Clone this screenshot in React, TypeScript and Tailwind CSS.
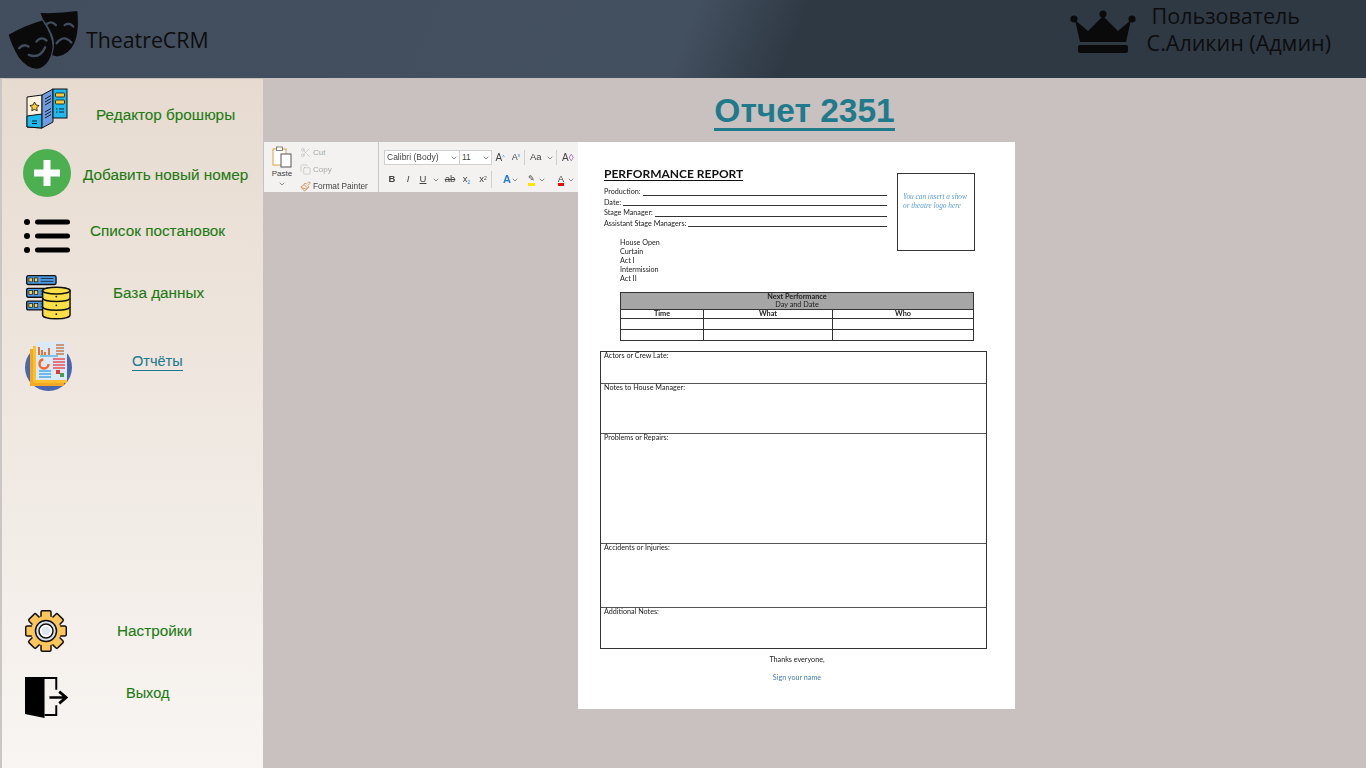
import { ChevronDown, Scissors, Copy, Paintbrush } from "lucide-react";

const sans = "font-['Liberation_Sans',Arial,sans-serif]";
const doc = "font-['Lato','Open_Sans',sans-serif]";

const MasksLogo = () => (
  <svg viewBox="20 25 215 185" className="h-[62px] w-[72px]">
    <path d="M120 40Q175 42 230 34Q236 90 222 128Q205 165 170 170L155 166Q166 130 155 105Q140 72 128 60Z" fill="#0a0a0a" />
    <path d="M140 72Q153 62 166 76M192 76Q205 66 218 80M168 130Q190 102 212 128" fill="none" stroke="#414d5c" strokeWidth="7" strokeLinecap="round" />
    <path d="M25 105Q70 78 125 62Q155 105 156 140Q152 190 118 205Q85 212 55 172Q35 140 25 105Z" fill="#0a0a0a" />
    <path d="M56 145Q70 130 84 140M108 125Q122 108 138 122M85 165Q118 178 134 142" fill="none" stroke="#414d5c" strokeWidth="7" strokeLinecap="round" />
  </svg>
);

const Crown = () => (
  <svg viewBox="0 0 66 46" className="h-[46px] w-[66px]">
    <circle cx="4" cy="9" r="3.6" fill="#0a0a0a" />
    <circle cx="33" cy="4" r="3.6" fill="#0a0a0a" />
    <circle cx="62" cy="9" r="3.6" fill="#0a0a0a" />
    <path d="M5 10L18 21L33 6L48 21L61 10L56 32H10Z" fill="#0a0a0a" />
    <rect x="8" y="35" width="50" height="8" rx="2" fill="#0a0a0a" />
  </svg>
);

const Brochure = () => (
  <svg viewBox="0 0 42 42" className="h-[42px] w-[42px]">
    <path d="M1 9L16 7V40L1 39Z" fill="#fdf3e0" stroke="#111" strokeWidth="1" />
    <path d="M1 28L16 26V40L1 39Z" fill="#21b8ee" stroke="#111" strokeWidth="1" />
    <path d="M16 7L27 1V34L16 40Z" fill="#6f9be0" stroke="#111" strokeWidth="1" />
    <path d="M19 11L25 7.5M19 14L25 10.5M19 17L25 13.5M19 24L25 20.5M19 27L25 23.5M19 30L25 26.5" stroke="#111" strokeWidth="0.9" />
    <rect x="27" y="1" width="14" height="29" fill="#21b8ee" stroke="#111" strokeWidth="1" />
    <rect x="29.500" y="5" width="9" height="4" rx="1" fill="#fcc93c" stroke="#111" strokeWidth="0.8" />
    <rect x="29.500" y="12" width="9" height="4" rx="1" fill="#fcc93c" stroke="#111" strokeWidth="0.8" />
    <path d="M30 21H31.500M33 21H38M30 24H31.500M33 24H38" stroke="#111" strokeWidth="0.9" />
    <path d="M8.500 14L10 17L13 17.500L10.800 19.800L11.200 22.800L8.500 21.400L5.800 22.800L6.200 19.800L4 17.500L7 17Z" fill="#fcc93c" stroke="#111" strokeWidth="0.8" />
    <path d="M6 33H11M6 35.500H11" stroke="#111" strokeWidth="0.9" />
  </svg>
);

const AddIcon = () => (
  <svg viewBox="0 0 48 48" className="h-[48px] w-[48px]">
    <circle cx="24" cy="24" r="24" fill="#4caf50" />
    <path d="M20.500 11H27.500V20.500H37V27.500H27.500V37H20.500V27.500H11V20.500H20.500Z" fill="#fff" />
  </svg>
);

const ListIcon = () => (
  <svg viewBox="0 0 46 34" className="h-[34px] w-[46px]">
    <circle cx="3" cy="3" r="3" fill="#000" />
    <circle cx="3" cy="17" r="3" fill="#000" />
    <circle cx="3" cy="31" r="3" fill="#000" />
    <rect x="11" y="0.500" width="35" height="5" rx="2.500" fill="#000" />
    <rect x="11" y="14.500" width="35" height="5" rx="2.500" fill="#000" />
    <rect x="11" y="28.500" width="35" height="5" rx="2.500" fill="#000" />
  </svg>
);

const Server = ({ y }: { y: number }) => (
  <g transform={`translate(0 ${y})`}>
    <rect x="0.700" y="0.700" width="30" height="9" rx="1.500" fill="#4d9be8" stroke="#111" strokeWidth="1.400" />
    <rect x="3" y="3" width="3.500" height="4" fill="#fcd34d" stroke="#111" strokeWidth="0.700" />
    <rect x="8.500" y="3" width="3.500" height="4" fill="#fcd34d" stroke="#111" strokeWidth="0.700" />
    <path d="M15 3.500H28M15 6.500H28" stroke="#111" strokeWidth="0.800" />
  </g>
);

const DbIcon = () => (
  <svg viewBox="0 0 46 46" className="h-[45px] w-[45px]">
    <Server y={0} />
    <Server y={13} />
    <Server y={26} />
    <path d="M17 16C17 12 45 12 45 16V41C45 46 17 46 17 41Z" fill="#fde047" stroke="#111" strokeWidth="1.500" />
    <ellipse cx="31" cy="16" rx="14" ry="3.500" fill="#fde047" stroke="#111" strokeWidth="1.500" />
    <path d="M17 24C20 28 42 28 45 24M17 33C20 37 42 37 45 33" fill="none" stroke="#111" strokeWidth="1.500" />
    <circle cx="31" cy="22" r="0.900" fill="#111" />
    <circle cx="31" cy="31" r="0.900" fill="#111" />
    <circle cx="31" cy="40" r="0.900" fill="#111" />
  </svg>
);

const ReportIcon = () => (
  <svg viewBox="0 0 47 49" className="h-[49px] w-[47px]">
    <circle cx="23.500" cy="25.500" r="23.500" fill="#4a66ad" />
    <rect x="5" y="7" width="34" height="37" fill="#f7a823" />
    <rect x="8" y="4" width="34" height="37" fill="#fbc02d" />
    <rect x="11" y="0" width="31" height="38" fill="#dbe9f6" />
    <path d="M14 5V13M17 8V13M20 10V13M24 6V13" stroke="#e2733b" strokeWidth="2" />
    <path d="M15 14H33" stroke="#1f9dd9" strokeWidth="1" />
    <path d="M31 3H39M31 6H39M31 9H39M31 12H39" stroke="#c97a48" strokeWidth="1.600" />
    <circle cx="19" cy="22" r="4.500" fill="none" stroke="#f0692f" strokeWidth="2.500" strokeDasharray="20 8" />
    <path d="M28 17H40M28 20H40M28 23H40M28 26H40" stroke="#ef4b55" strokeWidth="1.300" />
    <path d="M14 29H26M14 32H26M14 35H26" stroke="#45a9e8" strokeWidth="1.300" />
    <rect x="31" y="28" width="4" height="4" fill="#e53935" />
    <rect x="35" y="31" width="4" height="4" fill="#43a047" />
  </svg>
);

const GearIcon = () => (
  <svg viewBox="0 0 42 42" className="h-[42px] w-[42px]">
    {[0, 45, 90, 135, 180, 225, 270, 315].map((a) => (
      <rect key={a} x="16" y="0.700" width="10" height="10" rx="1.500" fill="#fcc65c" stroke="#111" strokeWidth="1.500" transform={`rotate(${a} 21 21)`} />
    ))}
    <circle cx="21" cy="21" r="15" fill="#fcc65c" />
    <circle cx="21" cy="21" r="10.500" fill="#dfe5ee" stroke="#111" strokeWidth="1.500" />
    <circle cx="21" cy="21" r="7" fill="#fff" stroke="#111" strokeWidth="1.500" />
    <circle cx="21" cy="21" r="4.500" fill="#dfe5ee" />
  </svg>
);

const ExitIcon = () => (
  <svg viewBox="0 0 44 44" className="h-[43px] w-[43px]">
    <path d="M17 2H32V14M32 30V40H20" fill="none" stroke="#000" strokeWidth="2" />
    <path d="M0 1H20V43L0 39Z" fill="#000" />
    <path d="M25 22H41M35 16L42 22L35 28" fill="none" stroke="#000" strokeWidth="2.800" />
  </svg>
);

const Chev = () => <ChevronDown className="h-[8px] w-[8px] text-[#555]" strokeWidth={2} />;

const Ribbon = () => (
  <div className={`flex h-[50px] w-[314px] bg-[#f3f2f1] text-[#444] blur-[0.3px] ${sans}`}>
    <div className="flex w-[36px] flex-col items-center pt-[4px]">
      <svg viewBox="0 0 20 22" className="h-[22px] w-[20px]">
        <rect x="1" y="3" width="13" height="16" fill="#fff" stroke="#e0a040" strokeWidth="1" />
        <rect x="4.500" y="1" width="6" height="3.500" fill="#fff" stroke="#666" strokeWidth="0.800" />
        <rect x="9" y="8" width="10" height="13" fill="#fff" stroke="#555" strokeWidth="1" />
      </svg>
      <span className="text-[8px] leading-[12px]">Paste</span>
      <Chev />
    </div>
    <div className="flex w-[78px] flex-col gap-[4px] pt-[4px] text-[8px] leading-[13px]">
      <div className="flex items-center gap-[2px] text-[#a8a8a8]"><Scissors className="h-[11px] w-[11px]" strokeWidth={1} /> Cut</div>
      <div className="flex items-center gap-[2px] text-[#a8a8a8]"><Copy className="h-[11px] w-[11px]" strokeWidth={1} /> Copy</div>
      <div className="flex items-center gap-[2px]"><Paintbrush className="h-[11px] w-[11px] text-[#c97a30]" strokeWidth={1.500} /> <span className="whitespace-nowrap text-[8.300px]">Format Painter</span></div>
    </div>
    <div className="h-[50px] w-px bg-[#c8c6c4]" />
    <div className="flex flex-col gap-[7px] pl-[5px] pt-[8px]">
      <div className="flex h-[15px] items-center">
        <div className="flex h-[15px] w-[76px] items-center justify-between border border-[#d0d0d0] bg-white pl-[2px] pr-[1px] text-[8.500px]">Calibri (Body)<Chev /></div>
        <div className="flex h-[15px] w-[32px] items-center justify-between border border-l-0 border-[#d0d0d0] bg-white pl-[2px] pr-[1px] text-[8.500px]">11<Chev /></div>
        <span className="w-[16px] text-center text-[10px]">A<sup className="text-[5px] text-[#2b7cd3]">^</sup></span>
        <span className="w-[16px] text-center text-[9px]">A<sup className="text-[5px] text-[#2b7cd3]">v</sup></span>
        <span className="w-[22px] border-l border-[#d0d0d0] pl-[5px] text-[9.500px]">Aa</span>
        <span className="w-[10px]"><Chev /></span>
        <span className="border-l border-[#d0d0d0] pl-[5px] text-[10px]">A<span className="text-[#9b59b6]">◊</span></span>
      </div>
      <div className="flex h-[15px] items-center text-[9.500px]">
        <b className="w-[16px] text-center">B</b>
        <i className="w-[16px] text-center">I</i>
        <u className="w-[14px] text-center">U</u>
        <span className="flex w-[12px] justify-center"><Chev /></span>
        <s className="w-[16px] text-center">ab</s>
        <span className="w-[17px] text-center">x<sub className="text-[5px] text-[#2b7cd3]">2</sub></span>
        <span className="w-[16px] text-center">x<sup className="text-[5px]">2</sup></span>
        <span className="flex w-[31px] items-center justify-end border-l border-[#d0d0d0] pr-[3px] text-[11px] font-bold text-[#2b7cd3]">A<Chev /></span>
        <span className="flex w-[26px] items-center justify-end pr-[2px]"><span className="mr-[3px] border-b-[3px] border-[#ffe500] text-[8px] leading-[9px]">✎</span><Chev /></span>
        <span className="flex w-[27px] items-center justify-end"><span className="mr-[3px] border-b-[3px] border-[#e01010] text-[9.500px] leading-[9px]">A</span><Chev /></span>
      </div>
    </div>
  </div>
);

const fields = ["Production:", "Date:", "Stage Manager:", "Assistant Stage Managers:"];

const boxes = [
  { title: "Actors or Crew Late:", h: "h-[32px]" },
  { title: "Notes to House Manager:", h: "h-[50px]" },
  { title: "Problems or Repairs:", h: "h-[110px]" },
  { title: "Accidents or Injuries:", h: "h-[64px]" },
  { title: "Additional Notes:", h: "h-[40px]" },
];

const ReportPage = () => (
  <div className={`h-[567px] w-[437px] bg-white pt-[25px] text-[7.200px] leading-[10.500px] text-[#222] blur-[0.3px] ${doc}`}>
    <div className="flex pl-[26px]">
      <div className="w-[283px]">
        <div className="h-[14px] w-max border-b border-[#111] text-[12px] font-bold leading-[13px] text-[#111]">PERFORMANCE REPORT</div>
        <div className="mt-[6px]">
          {fields.map((label) => (
            <div key={label} className="flex">
              <span className="whitespace-nowrap">{label}</span>
              <span className="mb-[2px] ml-[2px] flex-1 border-b border-[#333]" />
            </div>
          ))}
        </div>
        <div className="mt-[9px] pl-[16px] leading-[9px]">
          <div>House Open</div>
          <div>Curtain</div>
          <div>Act I</div>
          <div>Intermission</div>
          <div>Act II</div>
        </div>
      </div>
      <div className="ml-[10px] mt-[6px] h-[78px] w-[78px] border border-[#333] px-[5px] pt-[19px] font-['Liberation_Serif',serif] text-[7.300px] italic leading-[8.500px] text-[#5b9bd5]">
        You can insert a show or theatre logo here
      </div>
    </div>
    <div className="ml-[42px] mt-[9px] w-[354px] border border-[#333] text-center text-[7.300px]">
      <div className="h-[17px] border-b border-[#333] bg-[#a6a6a6] leading-[8px]">
        <div className="font-bold">Next Performance</div>
        <div>Day and Date</div>
      </div>
      <div className="grid h-[9px] grid-cols-[82px_129px_1fr] border-b border-[#333] font-bold leading-[8px]">
        <div>Time</div>
        <div className="border-l border-[#333]">What</div>
        <div className="border-l border-[#333]">Who</div>
      </div>
      <div className="grid h-[11px] grid-cols-[82px_129px_1fr] border-b border-[#333]">
        <div />
        <div className="border-l border-[#333]" />
        <div className="border-l border-[#333]" />
      </div>
      <div className="grid h-[10px] grid-cols-[82px_129px_1fr]">
        <div />
        <div className="border-l border-[#333]" />
        <div className="border-l border-[#333]" />
      </div>
    </div>
    <div className="ml-[22px] mt-[10px] w-[387px] border border-[#333]">
      {boxes.map((b, i) => (
        <div key={b.title} className={`${b.h} ${i < boxes.length - 1 ? "border-b border-[#555]" : ""} pl-[3px] leading-[8px]`}>
          {b.title}
        </div>
      ))}
    </div>
    <div className="ml-[22px] mt-[6px] w-[387px] pl-[7px] text-center leading-[10px]">
      <div>Thanks everyone,</div>
      <div className="mt-[8px] text-[#4a80bd]">Sign your name</div>
    </div>
  </div>
);

export default function App() {
  const base = `leading-[18px] whitespace-nowrap [-webkit-text-stroke:0.1px] ${sans}`;
  const item = `text-[15.300px] text-[#217a12] ${base}`;
  return (
    <div className="flex h-[768px] w-[1366px] flex-col overflow-hidden bg-[#c9c1bf]">
      <header className="flex h-[78px] items-start justify-between bg-[linear-gradient(112deg,#424e5e_0%,#435060_50%,#2f3944_58%,#2f3944_100%)]">
        <div className="flex items-center pl-[7px] pt-[8px]">
          <MasksLogo />
          <span className="ml-[7px] pt-[2px] font-['Open_Sans',sans-serif] text-[21.300px] leading-[28px] text-[#0d0d0d]">TheatreCRM</span>
        </div>
        <div className="flex pr-[35px] pt-[2px]">
          <div className="pt-[8px]"><Crown /></div>
          <div className="ml-[11px] font-['Open_Sans',sans-serif] text-[21.500px] leading-[27px] text-[#0d0d0d]">
            <div className="pl-[5px]">Пользователь</div>
            <div>С.Аликин (Админ)</div>
          </div>
        </div>
      </header>
      <div className="flex flex-1">
        <aside className="mt-[1px] flex w-[263px] flex-col border-l-2 border-[#c9c6c4] bg-[linear-gradient(180deg,#e7dbd0_0%,#f8f5f2_100%)] pt-[9px]">
          <div className="flex h-[61px] pl-[24px]">
            <Brochure />
            <span className={`ml-[28px] mt-[18px] ${item}`}>Редактор брошюры</span>
          </div>
          <div className="flex h-[70px] pl-[21px]">
            <AddIcon />
            <span className={`ml-[12px] mt-[17px] ${item}`}>Добавить новый номер</span>
          </div>
          <div className="flex h-[56px] pl-[22px]">
            <ListIcon />
            <span className={`ml-[20px] mt-[3px] ${item}`}>Список постановок</span>
          </div>
          <div className="flex h-[67px] pl-[24px]">
            <DbIcon />
            <span className={`ml-[42px] mt-[9px] ${item}`}>База данных</span>
          </div>
          <div className="flex pl-[23px]">
            <ReportIcon />
            <span className={`ml-[60px] mt-[10px] h-[19px] border-b border-[#1f7a8c] text-[14.500px] text-[#1f7a8c] ${base}`}>Отчёты</span>
          </div>
          <div className="mt-auto flex h-[66px] pl-[23px]">
            <GearIcon />
            <span className={`ml-[50px] mt-[12px] ${item}`}>Настройки</span>
          </div>
          <div className="mb-[49px] flex h-[43px] pl-[23px]">
            <ExitIcon />
            <span className={`ml-[58px] mt-[8px] text-[14.500px] text-[#217a12] ${base}`}>Выход</span>
          </div>
        </aside>
        <main className="flex-1 pl-[1px]">
          <div className="flex h-[64px] w-[1081px] justify-center pt-[13px]">
            <h1 className={`h-[40px] border-b-[3px] border-[#1f7a8c] text-[33.500px] font-bold leading-[39px] text-[#1f7a8c] ${sans}`}>Отчет 2351</h1>
          </div>
          <div className="flex items-start">
            <Ribbon />
            <ReportPage />
          </div>
        </main>
      </div>
    </div>
  );
}
